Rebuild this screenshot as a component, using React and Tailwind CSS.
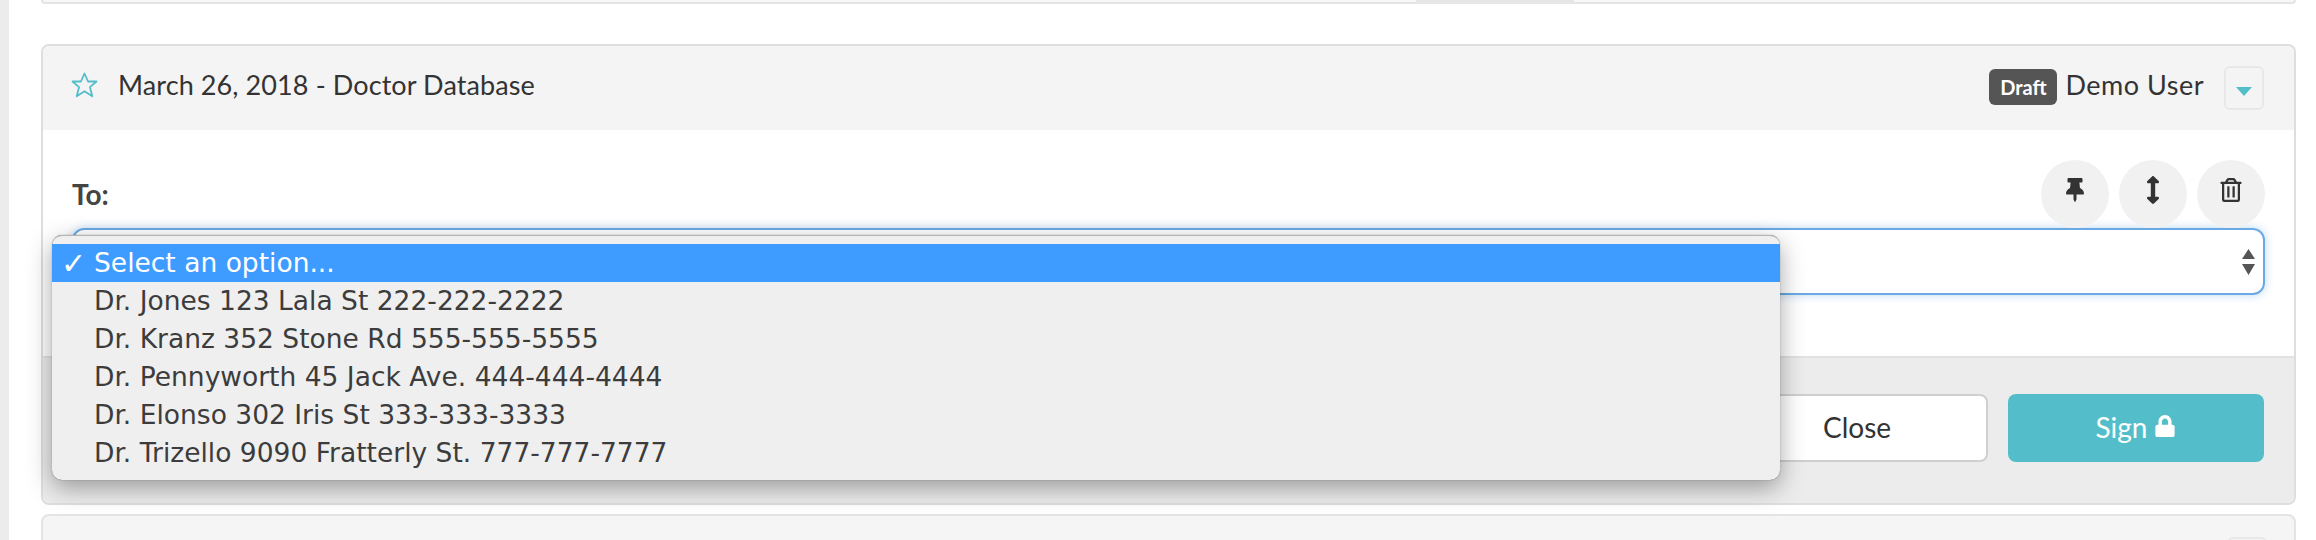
import React from 'react';
import { FaThumbtack, FaArrowsAltV, FaRegTrashAlt, FaLock } from 'react-icons/fa';

const options = [
  'Dr. Jones 123 Lala St 222-222-2222',
  'Dr. Kranz 352 Stone Rd 555-555-5555',
  'Dr. Pennyworth 45 Jack Ave. 444-444-4444',
  'Dr. Elonso 302 Iris St 333-333-3333',
  'Dr. Trizello 9090 Fratterly St. 777-777-7777',
];

function CaretBox({ className }) {
  return (
    <div className={'w-[40px] h-[44px] border-2 border-[#e8e8e8] rounded-md flex items-center justify-center pt-[6px] ' + className}>
      <svg width="16" height="9" viewBox="0 0 16 9"><path d="M0 0h16L8 9z" fill="#53bec9" /></svg>
    </div>
  );
}

function RoundBtn({ children }) {
  return (
    <div className="w-[68px] h-[68px] rounded-full bg-[#f1f1f1] flex items-center justify-center pb-[8px] text-[#333]">
      {children}
    </div>
  );
}

export default function App() {
  return (
    <div className="h-[540px] overflow-hidden flex bg-white font-['Lato',sans-serif] text-[#333]">
      <div className="w-[9px] shrink-0 bg-[#ececec]" />
      <div className="flex-1 pl-[32px] pr-[20px]">
        {/* previous card, only its bottom edge shows */}
        <div className="h-[4px] border-b-2 border-x-2 border-[#e4e4e4] rounded-b-md bg-[#f7f7f7]">
          <div className="ml-[1373px] w-[158px] h-[4px] bg-[#e6e6e6]" />
        </div>

        <div className="relative mt-[40px] border-2 border-[#dedede] rounded-lg">
          <div className="h-[84px] bg-[#f4f4f4] rounded-t-md flex items-center pl-[28px] pr-[30px]">
            <svg width="27" height="26" viewBox="0 0 27 26" className="mr-[20px] mb-[6px]">
              <path d="M13.5 1.5l3.6 8h8.4l-6.6 5.6 2.4 9.2-7.8-5-7.8 5 2.4-9.2L1.5 9.5h8.4z" fill="none" stroke="#53bec9" strokeWidth="1.8" strokeLinejoin="round" />
            </svg>
            <span className="text-[27px] mb-[6px] tracking-[0.1px]">March 26, 2018 - Doctor Database</span>
            <span className="ml-auto bg-[#555] text-white text-[20px] font-bold h-[36px] w-[68px] rounded-md flex items-center justify-center mb-[2px]">Draft</span>
            <span className="ml-[8px] text-[27px] mb-[6px] tracking-[0.5px]">Demo User</span>
            <CaretBox className="ml-[20px] bg-[#f4f4f4]" />
          </div>

          <div className="h-[226px] bg-white px-[29px] pt-[30px]">
            <div className="flex items-center justify-between h-[68px]">
              <span className="text-[28px] font-bold text-[#444]">To:</span>
              <div className="flex gap-[10px]">
                <RoundBtn><FaThumbtack className="text-[24px]" /></RoundBtn>
                <RoundBtn><FaArrowsAltV className="text-[28px]" /></RoundBtn>
                <RoundBtn><FaRegTrashAlt className="text-[24px]" /></RoundBtn>
              </div>
            </div>
            <div className="h-[67px] border-2 border-[#6aa9e4] rounded-xl shadow-[0_0_10px_rgba(106,169,228,0.45)] flex items-center justify-end pr-[8px]">
              <svg width="13" height="26" viewBox="0 0 13 26"><path d="M6.5 0L13 10H0zM0 15h13L6.5 26z" fill="#555" /></svg>
            </div>
          </div>

          <div className="h-[147px] bg-[#ececec] border-t-2 border-[#e2e2e2] rounded-b-md flex justify-end gap-[20px] pt-[36px] pr-[30px]">
            <button className="w-[262px] h-[68px] pb-[2px] bg-white border-2 border-[#cfcfcf] rounded-lg text-[28px]">Close</button>
            <button className="w-[256px] h-[68px] pb-[2px] bg-[#53bec9] rounded-lg text-white text-[28px] flex items-center justify-center gap-[7px]">
              Sign <FaLock className="text-[22px] mb-[3px]" />
            </button>
          </div>

          {/* native select popup */}
          <div className="absolute left-[9px] top-[189px] w-[1728px] h-[245px] pt-[8px] bg-[#efefef] border-t border-[#b5b5b5] rounded-[10px] shadow-[0_8px_24px_rgba(0,0,0,0.35),0_0_1px_rgba(0,0,0,0.6)] font-['DejaVu_Sans',sans-serif] text-[26.5px] text-[#3c3c3c]">
            <div className="h-[38px] bg-[#3e9bff] text-white flex items-center">
              <span className="w-[42px] pl-[9px] text-[30px] font-bold">✓</span>
              <span>Select an option...</span>
            </div>
            {options.map((o) => (
              <div key={o} className="h-[38px] pl-[42px] flex items-center">{o}</div>
            ))}
          </div>
        </div>

        <div className="relative mt-[9px] h-[60px] border-2 border-[#e4e4e4] rounded-lg bg-[#f5f5f5] pt-[21px] pl-[2184px]">
          <div className="w-[40px] h-[44px] border-2 border-[#e8e8e8] rounded-md" />
        </div>
      </div>
    </div>
  );
}
